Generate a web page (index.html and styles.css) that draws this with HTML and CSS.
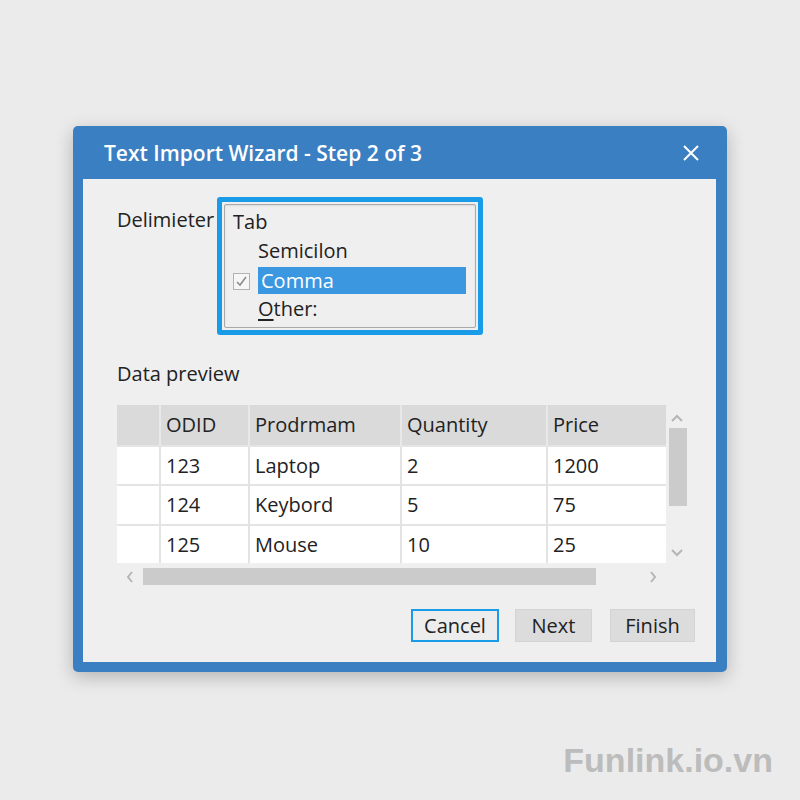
FILE: index.html
```html
<!DOCTYPE html>
<html>
	<head>
		<meta charset="UTF-8">
		<title>Text Import Wizard</title>
		<link rel="stylesheet" href="styles.css">
	</head>
	<body>
		<div class="wizard">
			<div class="wizard-title">
				<span>Text Import Wizard - Step 2 of 3</span>
				<svg class="close" width="16" height="16" viewBox="0 0 16 16">
					<path d="M1 1L15 15M15 1L1 15" stroke="#fff" stroke-width="2" fill="none"/>
				</svg>
			</div>
			<div class="wizard-body">
				<div class="delim-row">
					<div class="delim-label">Delimieter</div>
					<div class="focus-box">
						<div class="delim-list">
							<div class="opt opt-tab">Tab</div>
							<div class="opt"><span class="chk blank"></span><span class="opt-text">Semicilon</span></div>
							<div class="opt">
								<span class="chk">
									<svg width="13" height="13" viewBox="0 0 13 13"><path d="M2 7L5 10L11 2" stroke="#8a8a8a" stroke-width="1.5" fill="none"/></svg>
								</span>
								<span class="opt-text selected">Comma</span>
							</div>
							<div class="opt"><span class="chk blank"></span><span class="opt-text"><u>O</u>ther:</span></div>
						</div>
					</div>
				</div>

				<div class="preview-label">Data preview</div>

				<div class="preview">
					<table class="grid">
						<colgroup>
							<col class="c-row">
							<col class="c-id">
							<col class="c-name">
							<col class="c-qty">
							<col>
						</colgroup>
						<tr>
							<th class="rowhead"></th>
							<th>ODID</th>
							<th>Prodrmam</th>
							<th>Quantity</th>
							<th>Price</th>
						</tr>
						<tr>
							<td class="rowhead"></td>
							<td>123</td>
							<td>Laptop</td>
							<td>2</td>
							<td>1200</td>
						</tr>
						<tr>
							<td class="rowhead"></td>
							<td>124</td>
							<td>Keybord</td>
							<td>5</td>
							<td>75</td>
						</tr>
						<tr>
							<td class="rowhead"></td>
							<td>125</td>
							<td>Mouse</td>
							<td>10</td>
							<td>25</td>
						</tr>
					</table>
					<div class="vscroll">
						<svg class="arrow" width="12" height="8" viewBox="0 0 12 8"><path d="M1 7L6 2L11 7" stroke="#b5b5b5" stroke-width="2" fill="none"/></svg>
						<div class="vthumb"></div>
						<div class="spacer"></div>
						<svg class="arrow" width="12" height="8" viewBox="0 0 12 8"><path d="M1 1L6 6L11 1" stroke="#b5b5b5" stroke-width="2" fill="none"/></svg>
					</div>
					<div class="hscroll">
						<div class="harrow">
							<svg width="8" height="12" viewBox="0 0 8 12"><path d="M6 1L2 6L6 11" stroke="#b5b5b5" stroke-width="2" fill="none"/></svg>
						</div>
						<div class="hthumb"></div>
						<div class="spacer"></div>
						<div class="harrow">
							<svg width="8" height="12" viewBox="0 0 8 12"><path d="M2 1L6 6L2 11" stroke="#b5b5b5" stroke-width="2" fill="none"/></svg>
						</div>
					</div>
					<div class="corner"></div>
				</div>

				<div class="buttons">
					<div class="btn btn-cancel">Cancel</div>
					<div class="btn btn-next">Next</div>
					<div class="btn btn-finish">Finish</div>
				</div>
			</div>
		</div>
		<div class="watermark">Funlink.io.vn</div>
	</body>
</html>
```

FILE: styles.css
```css
body{
	margin: 0;
	padding-top: 126px;
	background: #ebebeb;
	font-family: "Open Sans", "Noto Sans", sans-serif;
	color: #222;
}

.wizard{
	width: 654px;
	margin-left: 73px;
	box-sizing: border-box;
	padding: 0 11px 10px 10px;
	background: #3b7fc3;
	border-radius: 5px;
	box-shadow: 0 5px 18px rgba(0,0,0,0.24);
}
.wizard-title{
	height: 53px;
	display: flex;
	align-items: center;
	justify-content: space-between;
	padding: 0 17px 0 21px;
	color: #fff;
	font-size: 21px;
	font-weight: 600;
}
.close{
	display: block;
}

.wizard-body{
	background: #efefef;
	padding: 18px 21px 20px 34px;
	font-size: 20px;
}

.delim-row{
	display: flex;
	align-items: flex-start;
}
.delim-label{
	width: 100px;
	margin-top: 11px;
	line-height: 24px;
}
.focus-box{
	width: 266px;
	height: 138px;
	box-sizing: border-box;
	border: 5px solid #1a9be8;
	border-radius: 3px;
	padding: 2px;
}
.delim-list{
	height: 100%;
	box-sizing: border-box;
	border: 1px solid #a9a9a9;
	border-radius: 2px;
	padding: 2px 9px 0 8px;
	box-shadow: inset 0 1px 2px rgba(0,0,0,0.08);
}
.opt{
	display: flex;
	align-items: center;
	height: 29px;
	line-height: 29px;
}
.chk{
	width: 17px;
	height: 17px;
	box-sizing: border-box;
	margin-top: 4px;
	margin-right: 8px;
	border: 1px solid #b3b3b3;
	background: #f6f6f6;
	display: flex;
	align-items: center;
	justify-content: center;
}
.chk.blank{
	visibility: hidden;
}
.opt-text{
	flex: 1;
}
.opt-text.selected{
	height: 27px;
	line-height: 27px;
	margin-top: 2px;
	padding-left: 3px;
	background: #3a97e0;
	color: #fff;
}
.opt-text u{
	text-underline-offset: 3px;
}

.preview-label{
	margin-top: 27px;
	line-height: 24px;
}

.preview{
	margin-top: 19px;
	display: grid;
	grid-template-columns: 549px 24px;
	grid-template-rows: 158px 24px;
}
.grid{
	border-collapse: collapse;
	width: 549px;
	table-layout: fixed;
}
.c-row{ width: 43px; }
.c-id{ width: 89px; }
.c-name{ width: 152px; }
.c-qty{ width: 146px; }
.grid th, .grid td{
	padding: 0 0 0 5px;
	text-align: left;
	font-weight: normal;
	border-left: 2px solid #e3e3e3;
}
.grid th{
	height: 39px;
	background: #dadada;
	border-left-color: #e8e8e8;
}
.grid td{
	height: 37px;
	background: #fff;
	border-top: 2px solid #e4e4e4;
}
.grid .rowhead{
	border-left: none;
}

.vscroll{
	display: flex;
	flex-direction: column;
	align-items: center;
	padding: 9px 0 6px;
}
.vscroll .arrow{
	display: block;
	margin-left: -2px;
}
.vthumb{
	width: 18px;
	height: 78px;
	margin-top: 6px;
	background: #cbcbcb;
}
.spacer{
	flex: 1;
}
.hscroll{
	display: flex;
	align-items: center;
	padding-top: 3px;
}
.harrow{
	width: 26px;
	display: flex;
	justify-content: center;
}
.hthumb{
	width: 453px;
	height: 17px;
	background: #cbcbcb;
}

.buttons{
	margin-top: 22px;
	display: flex;
	justify-content: flex-end;
}
.btn{
	height: 33px;
	box-sizing: border-box;
	display: flex;
	align-items: center;
	justify-content: center;
	background: #dcdcdc;
	border: 1px solid #d4d4d4;
}
.btn-cancel{
	width: 88px;
	background: #ededed;
	border: 2px solid #1a9be8;
}
.btn-next{
	width: 77px;
	margin-left: 16px;
}
.btn-finish{
	width: 85px;
	margin-left: 18px;
}

.watermark{
	margin-top: 68px;
	padding-right: 27px;
	text-align: right;
	font-family: "Liberation Sans", Arial, sans-serif;
	font-weight: bold;
	font-size: 34px;
	line-height: 40px;
	color: #bcbcbc;
}
```
